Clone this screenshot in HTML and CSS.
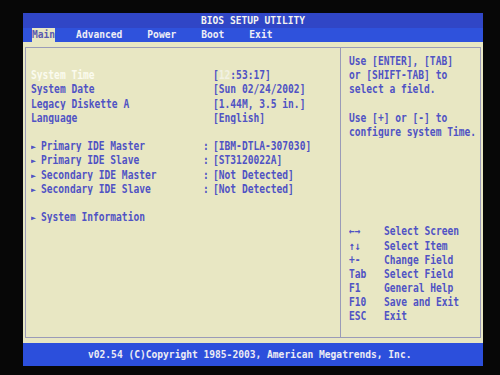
FILE: index.html
```html
<!doctype html>
<html>
<head>
    <meta charset="UTF-8">
    <title>BIOS SETUP UTILITY</title>
    <link rel="stylesheet" href="styles.css">
</head>
<body>
    <div class="screen">
        <div class="title">BIOS SETUP UTILITY</div>
        <div class="menu">
            <span class="tab tab-on">Main</span>
            <span class="tab">Advanced</span>
            <span class="tab">Power</span>
            <span class="tab">Boot</span>
            <span class="tab">Exit</span>
        </div>
        <div class="body">
            <div class="frame">
                <div class="items">
                    <div class="row"></div>
                    <div class="row"><span class="label sel">System Time</span><span class="colon"></span><span class="value">[<b class="cursor">12</b>:53:17]</span></div>
                    <div class="row"><span class="label">System Date</span><span class="colon"></span><span class="value">[Sun 02/24/2002]</span></div>
                    <div class="row"><span class="label">Legacy Diskette A</span><span class="colon"></span><span class="value">[1.44M, 3.5 in.]</span></div>
                    <div class="row"><span class="label">Language</span><span class="colon"></span><span class="value">[English]</span></div>
                    <div class="row"></div>
                    <div class="row"><span class="label"><i class="arrow">&#9658;</i>Primary IDE Master</span><span class="colon">:</span><span class="value">[IBM-DTLA-307030]</span></div>
                    <div class="row"><span class="label"><i class="arrow">&#9658;</i>Primary IDE Slave</span><span class="colon">:</span><span class="value">[ST3120022A]</span></div>
                    <div class="row"><span class="label"><i class="arrow">&#9658;</i>Secondary IDE Master</span><span class="colon">:</span><span class="value">[Not Detected]</span></div>
                    <div class="row"><span class="label"><i class="arrow">&#9658;</i>Secondary IDE Slave</span><span class="colon">:</span><span class="value">[Not Detected]</span></div>
                    <div class="row"></div>
                    <div class="row"><span class="label"><i class="arrow">&#9658;</i>System Information</span></div>
                </div>
                <div class="help">
                    <div class="row">Use [ENTER], [TAB]</div>
                    <div class="row">or [SHIFT-TAB] to</div>
                    <div class="row">select a field.</div>
                    <div class="row"></div>
                    <div class="row">Use [+] or [-] to</div>
                    <div class="row">configure system Time.</div>

                    <div class="keys">
                        <div class="row"><span class="key">&larr;&rarr;</span>Select Screen</div>
                        <div class="row"><span class="key">&uarr;&darr;</span>Select Item</div>
                        <div class="row"><span class="key">+-</span>Change Field</div>
                        <div class="row"><span class="key">Tab</span>Select Field</div>
                        <div class="row"><span class="key">F1</span>General Help</div>
                        <div class="row"><span class="key">F10</span>Save and Exit</div>
                        <div class="row"><span class="key">ESC</span>Exit</div>
                    </div>
                </div>
            </div>
        </div>
        <div class="footer">v02.54 (C)Copyright 1985-2003, American Megatrends, Inc.</div>
    </div>
</body>
</html>
```

FILE: styles.css
```css
* { margin: 0; padding: 0; box-sizing: border-box; }
html, body { background: #070707; height: 100%; }
body { overflow: hidden; }

.screen { width: 460px; margin: 13px 0 0 23px; font-family: "DejaVu Sans Mono", "Liberation Mono", monospace; font-size: 9.6px; font-weight: bold; color: #5053c4; }

.title { height: 15px; line-height: 15px; background: #3046c6; color: #f4f4f0; text-align: center; }
.menu { height: 14px; line-height: 14px; background: #2f52dc; color: #eeeef6; display: flex; padding-left: 9px; }
.tab { margin-right: 25px; }
.tab-on { background: #e8e7c3; color: #5a5ab0; margin-right: 21px; }

.body { background: #e8e7c3; height: 301px; padding: 5px 2px; }
.frame { height: 291px; border: 1px solid #9a9bb8; display: flex; }

.row { height: 14.2px; line-height: 14.2px; white-space: pre; display: flex; transform: scaleY(1.2); }

.items { width: 314px; padding: 6px 0 0 5px; }
.label { width: 172px; display: flex; }
.colon { width: 10px; }
.arrow { font-style: normal; font-size: 8.5px; width: 10px; }
.sel { color: #fbfbef; }
.cursor { color: #f2f2e4; font-weight: bold; }

.help { flex: 1; border-left: 1px solid #9a9bb8; padding: 6px 0 0 8px; }
.keys { margin-top: 85.2px; }
.key { width: 35px; }

.footer { height: 23px; line-height: 23px; background: #2c4fdc; color: #ececf4; padding-left: 65px; }
```
